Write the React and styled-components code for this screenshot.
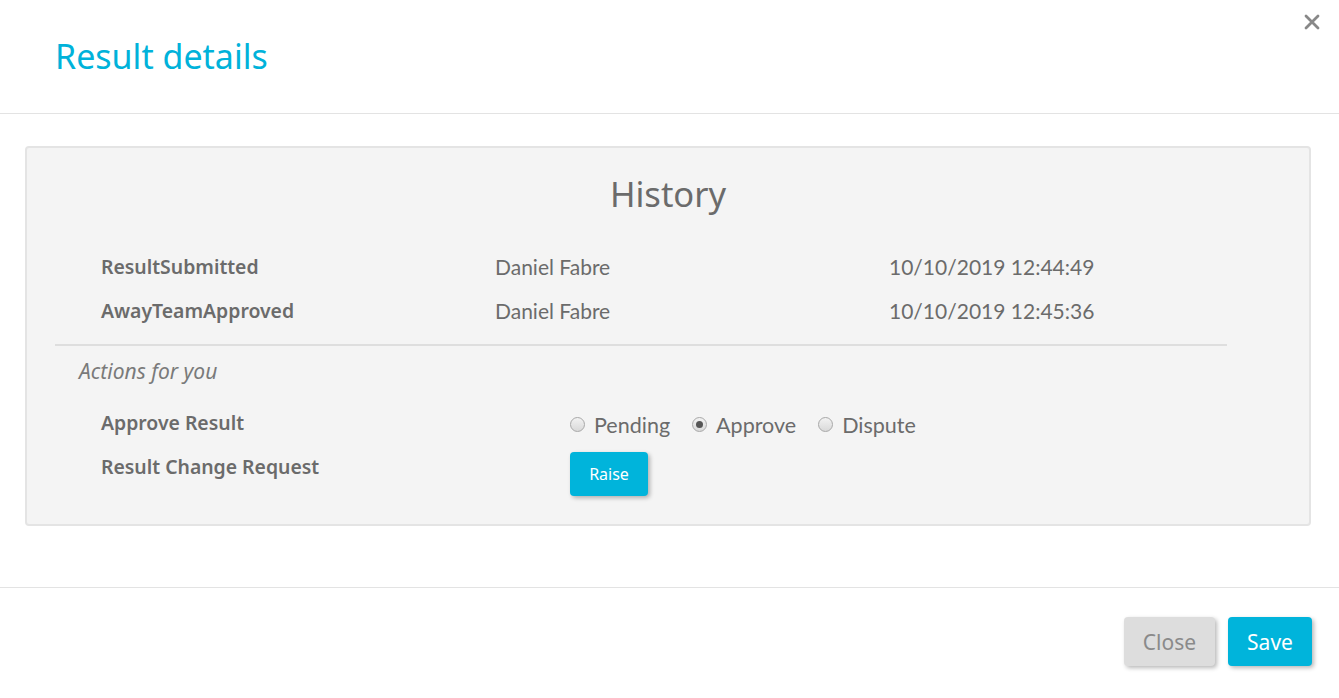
import { useState, Fragment } from "react";
import styled, { createGlobalStyle } from "styled-components";

const GlobalStyle = createGlobalStyle`
  html, body {
    margin: 0;
    padding: 0;
    background: #ffffff;
  }
  * {
    box-sizing: border-box;
  }
`;

const Modal = styled.div`
  width: 1339px;
  height: 698px;
  display: flex;
  flex-direction: column;
  font-family: "Noto Sans", "Open Sans", sans-serif;
  color: #666666;
`;

const Header = styled.div`
  height: 114px;
  display: flex;
  justify-content: space-between;
  align-items: flex-start;
  padding: 0 15px 0 55px;
  border-bottom: 1px solid #e3e3e3;
`;

const Title = styled.h1`
  margin: 34px 0 0;
  font-size: 34px;
  font-weight: 400;
  line-height: 44px;
  color: #00b2da;
`;

const CloseX = styled.button`
  margin-top: 10px;
  border: none;
  background: none;
  padding: 0;
  width: 24px;
  height: 24px;
  color: #888888;
  cursor: pointer;
  display: flex;
  align-items: center;
  justify-content: center;
`;

const Body = styled.div`
  flex: 1;
  padding: 32px 28px 0 25px;
`;

const Panel = styled.div`
  height: 380px;
  background: #f4f4f4;
  border: 2px solid #e4e4e4;
  border-radius: 4px;
  padding: 24px 0 0 28px;
`;

const PanelTitle = styled.h2`
  margin: 0 0 0 -28px;
  text-align: center;
  font-size: 34.5px;
  font-weight: 400;
  line-height: 44px;
  color: #6b6b6b;
`;

const Section = styled.div`
  width: 1172px;
`;

const HistoryGrid = styled.div`
  display: grid;
  grid-template-columns: 394px 394px 394px;
  padding: 28px 0 12px 46px;
  border-bottom: 2px solid #dedede;
`;

const Cell = styled.div`
  height: 44px;
  display: flex;
  align-items: center;
  font-family: ${(p) => (p.$label ? '"Noto Sans", sans-serif' : 'Lato, "Noto Sans", sans-serif')};
  font-size: ${(p) => (p.$label ? "19.4px" : "21px")};
  font-weight: ${(p) => (p.$label ? 600 : 400)};
  color: #6b6b6b;
`;

const ActionsHeading = styled.div`
  margin: 12px 0 0 24px;
  font-size: 21px;
  font-style: italic;
  line-height: 26px;
  color: #7a7a7a;
`;

const ActionGrid = styled.div`
  display: grid;
  grid-template-columns: 469px 1fr;
  padding: 16px 0 0 46px;
`;

const ActionLabel = styled.div`
  height: 44px;
  display: flex;
  align-items: center;
  font-size: 19.4px;
  font-weight: 600;
  color: #6b6b6b;
`;

const ActionControl = styled.div`
  height: 44px;
  display: flex;
  align-items: center;
  padding-top: ${(p) => (p.$shift ? "5px" : "0")};
  gap: 22px;
`;

const RadioOption = styled.label`
  display: flex;
  align-items: center;
  gap: 9px;
  font-family: Lato, "Noto Sans", sans-serif;
  font-size: 21.5px;
  color: #6b6b6b;
  cursor: pointer;
`;

const RadioDot = styled.span`
  width: 15px;
  height: 15px;
  border-radius: 50%;
  border: 1px solid #a8a8a8;
  background: linear-gradient(#f2f2f2, #d9d9d9);
  display: flex;
  align-items: center;
  justify-content: center;
  &::after {
    content: "";
    width: 7px;
    height: 7px;
    border-radius: 50%;
    background: ${(p) => (p.$checked ? "#555555" : "transparent")};
  }
`;

const HiddenRadio = styled.input`
  display: none;
`;

const Button = styled.button`
  border: none;
  border-radius: 4px;
  font-family: "Noto Sans", sans-serif;
  cursor: pointer;
  box-shadow: 2px 2px 4px rgba(0, 0, 0, 0.28);
  background: ${(p) => (p.$variant === "grey" ? "#dddddd" : "#00b4db")};
  color: ${(p) => (p.$variant === "grey" ? "#8a8a8a" : "#ffffff")};
  font-size: ${(p) => (p.$small ? "16px" : "21px")};
  width: ${(p) => p.$w}px;
  height: ${(p) => p.$h}px;
  margin-top: ${(p) => p.$top || 0}px;
  padding: 0;
`;

const Footer = styled.div`
  height: 111px;
  border-top: 1px solid #e3e3e3;
  display: flex;
  justify-content: flex-end;
  align-items: flex-start;
  gap: 13px;
  padding: 29px 27px 0 0;
`;

const history = [
  { event: "ResultSubmitted", user: "Daniel Fabre", date: "10/10/2019 12:44:49" },
  { event: "AwayTeamApproved", user: "Daniel Fabre", date: "10/10/2019 12:45:36" },
];

const options = ["Pending", "Approve", "Dispute"];

export default function App() {
  const [choice, setChoice] = useState("Approve");

  return (
    <>
      <GlobalStyle />
      <Modal>
        <Header>
          <Title>Result details</Title>
          <CloseX aria-label="close">
            <svg width="16" height="16" viewBox="0 0 16 16">
              <path d="M2 2 L14 14 M14 2 L2 14" stroke="currentColor" strokeWidth="2.8" strokeLinecap="round" />
            </svg>
          </CloseX>
        </Header>
        <Body>
          <Panel>
            <PanelTitle>History</PanelTitle>
            <Section>
              <HistoryGrid>
                {history.map((h) => (
                  <Fragment key={h.event}>
                    <Cell $label>{h.event}</Cell>
                    <Cell>{h.user}</Cell>
                    <Cell>{h.date}</Cell>
                  </Fragment>
                ))}
              </HistoryGrid>
              <ActionsHeading>Actions for you</ActionsHeading>
              <ActionGrid>
                <ActionLabel>Approve Result</ActionLabel>
                <ActionControl $shift>
                  {options.map((o) => (
                    <RadioOption key={o} onClick={() => setChoice(o)}>
                      <HiddenRadio type="radio" name="approve" readOnly checked={choice === o} />
                      <RadioDot $checked={choice === o} />
                      {o}
                    </RadioOption>
                  ))}
                </ActionControl>
                <ActionLabel>Result Change Request</ActionLabel>
                <ActionControl>
                  <Button $small $w={78} $h={44} $top={15}>Raise</Button>
                </ActionControl>
              </ActionGrid>
            </Section>
          </Panel>
        </Body>
        <Footer>
          <Button $variant="grey" $w={91} $h={49}>Close</Button>
          <Button $w={84} $h={49}>Save</Button>
        </Footer>
      </Modal>
    </>
  );
}
